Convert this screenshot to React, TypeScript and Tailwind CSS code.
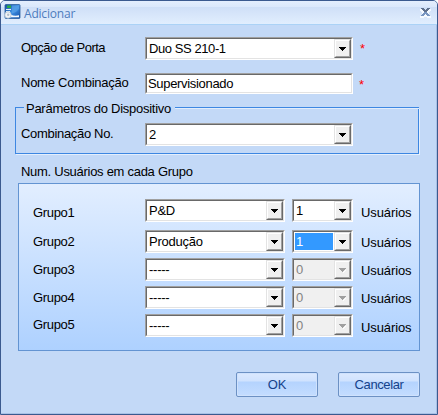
import React from "react";

function Arrow({ disabled }: { disabled?: boolean }) {
  return (
    <span className="flex h-[19px] w-[17px] shrink-0 border border-t-[#e3e3e3] border-l-[#e3e3e3] border-r-[#696969] border-b-[#696969]">
      <span className="flex flex-1 items-start justify-center border border-t-white border-l-white border-r-[#a0a0a0] border-b-[#a0a0a0] bg-[#f0f0f0] pt-[6px]">
        <svg width="7" height="5" viewBox="0 0 7 5" shapeRendering="crispEdges" className="shrink-0">
          {disabled && <path d="M4 4h1v-1h1v-1h1v1h-1v1h-1v1h-1z" fill="#ffffff" />}
          <path d="M0 0h7v1h-1v1h-1v1h-1v1h-1v-1h-1v-1h-1v-1h-1z" fill={disabled ? "#a0a0a0" : "#000000"} />
        </svg>
      </span>
    </span>
  );
}

function Field({ children, className = "" }: { children: React.ReactNode; className?: string }) {
  return (
    <div className={`flex shrink-0 border border-t-[#a0a0a0] border-l-[#a0a0a0] border-r-white border-b-white ${className}`}>
      <div className="flex min-w-0 flex-1 border border-t-[#696969] border-l-[#696969] border-r-[#e3e3e3] border-b-[#e3e3e3]">
        {children}
      </div>
    </div>
  );
}

function Combo({
  value,
  width,
  text = "tracking-[-0.24px]",
  selected,
  disabled,
}: {
  value: string;
  width: string;
  text?: string;
  selected?: boolean;
  disabled?: boolean;
}) {
  return (
    <Field className={`h-[23px] ${width} ${disabled ? "bg-[#f0f0f0]" : "bg-white"}`}>
      <div className="flex flex-1 p-px">
        <span
          className={`flex-1 pt-px pl-px whitespace-nowrap ${text} ${
            selected ? "bg-[#3399ff] text-white" : disabled ? "text-[#838383]" : "text-black"
          }`}
        >
          {value}
        </span>
      </div>
      <Arrow disabled={disabled} />
    </Field>
  );
}

function PushButton({ label, text }: { label: string; text: string }) {
  return (
    <button
      className={`h-[25px] w-[82px] rounded-[2px] border border-[#6c91c4] bg-[linear-gradient(to_bottom,#dce9fe_0,#cfe2fe_36%,#b4d3fe_38%,#c4ddff_100%)] pb-px text-[#15428b] shadow-[inset_0_0_0_1px_#cfe2fd] ${text}`}
    >
      {label}
    </button>
  );
}

const groups = [
  { name: "Grupo1", combo: "P&D", count: "1", row: "h-[31px]", left: "pt-[6px]", right: "pt-[6px]" },
  { name: "Grupo2", combo: "Produção", count: "1", selected: true, row: "h-[28px]", left: "pt-[4px]", right: "pt-[5px]" },
  { name: "Grupo3", combo: "-----", count: "0", disabled: true, row: "h-[28px]", left: "pt-[4px]", right: "pt-[5px]" },
  { name: "Grupo4", combo: "-----", count: "0", disabled: true, row: "h-[28px]", left: "pt-[4px]", right: "pt-[5px]" },
  { name: "Grupo5", combo: "-----", count: "0", disabled: true, row: "h-[28px]", left: "pt-[3px]", right: "pt-[6px]" },
];

export default function App() {
  return (
    <div className="h-[415px] w-[438px] bg-white font-['Liberation_Sans',Arial,sans-serif] text-[13px] leading-[15px] text-black">
      <div className="flex h-full flex-col overflow-hidden rounded-t-[5px] border border-[#3b5a8f] bg-[#c3d9f7] shadow-[inset_-1px_-1px_0_#a9c1e6]">
        <header className="flex h-[24px] shrink-0 items-start border-b border-[#abd2f6] bg-[linear-gradient(to_bottom,#e4eefd_0,#dbe8fb_6px,#cfdff7_6px,#e1eefe_23px)] pl-[3px]">
          <svg width="17" height="16" viewBox="0 0 17 16" className="mt-[3px]">
            <defs>
              <linearGradient id="screen" x1="0" y1="0" x2="1" y2="1">
                <stop offset="0" stopColor="#174c9c" />
                <stop offset="0.5" stopColor="#3f90e4" />
                <stop offset="1" stopColor="#1450a8" />
              </linearGradient>
            </defs>
            <path d="M1 1.5q0-1 1-1h13q1 0 1 1v12q0 1-1 1H2q-1 0-1-1z" fill="url(#screen)" stroke="#2c5f9e" strokeWidth="0.8" />
            <path d="M8 1.5h7v3q-2 4-7 5z" fill="#5ba4e8" opacity="0.65" />
            <rect x="3" y="1.5" width="4" height="2.5" fill="#29ad43" />
            <path d="M2 5.5h5M2 7.5h4" stroke="#e4f1fb" strokeWidth="1.2" />
            <path d="M6.500 10.500q4 2 8.500 0.800v2H6.500z" fill="#f6fbff" />
            <circle cx="4" cy="11" r="3.200" fill="#f1f4f7" stroke="#b5c3cf" strokeWidth="0.8" />
            <circle cx="4.200" cy="10.800" r="1.200" fill="#b3c0cc" />
          </svg>
          <span className="mt-[6px] ml-[3px] font-['Open_Sans','Noto_Sans',sans-serif] text-[12px] leading-[14px] tracking-[-0.2px] text-[#4d7cbd]">
            Adicionar
          </span>
          <svg width="11" height="10" viewBox="0 0 11 10" shapeRendering="crispEdges" className="mt-[7px] mr-[6px] ml-auto">
            <path d="M0 1h4v1h3v-1h4v2h-1v1h-1v3h1v1h1v2H7V9H4v1H0V8h1V7h1V4H1V3H0z" fill="#f5faff" />
            <path d="M1 0h3v1h1v1h1v-1h1v-1h3v1h-1v1h-1v1h-1v1H4V3H3V2H2V1H1z" fill="#60718e" />
            <path d="M4 4h3v1h1v1h1v1h1v1H7V7H6V6H5v1H4v1H1V7h1V6h1V5h1z" fill="#7895c0" />
          </svg>
        </header>

        <div className="flex h-[36px] shrink-0 items-start pt-[12px] pl-[20px]">
          <label className="w-[124px] pt-[3px] tracking-[-0.5px]">Opção de Porta</label>
          <Combo value="Duo SS 210-1" width="w-[208px]" text="tracking-[-0.42px]" />
          <span className="pt-[4px] pl-[7px] text-[#ff0000]">*</span>
        </div>
        <div className="flex h-[34px] shrink-0 items-start pt-[12px] pl-[20px]">
          <label className="w-[124px] pt-[2px] tracking-[-0.25px]">Nome Combinação</label>
          <Field className="h-[21px] w-[208px] bg-white">
            <span className="pt-px pl-px tracking-[-0.32px]">Supervisionado</span>
          </Field>
          <span className="pt-[4px] pl-[6px] text-[#ff0000]">*</span>
        </div>

        <fieldset className="mt-[6px] ml-[14px] h-[53px] w-[405px] shrink-0">
          <div className="flex h-[7px] items-end">
            <span className="h-px w-[9px] bg-[#3d87e2]" />
            <span className="-mb-[8px] w-[151px] pl-[2px] whitespace-nowrap tracking-[-0.27px]">Parâmetros do Dispositivo</span>
            <span className="h-px w-[244px] bg-[#3d87e2] shadow-[0_1px_0_#e1edfd]" />
          </div>
          <div className="flex h-[46px] w-[404px] items-start border-x border-b border-[#3d87e2] pt-[15px] pl-[5px] shadow-[1px_1px_0_#e4effd]">
            <label className="w-[124px] pt-[3px] tracking-[-0.32px]">Combinação No.</label>
            <Combo value="2" width="w-[208px]" />
          </div>
        </fieldset>

        <div className="mt-[10px] h-[19px] shrink-0 pl-[20px] tracking-[-0.28px]">Num. Usuários em cada Grupo</div>
        <section className="ml-[17px] h-[168px] w-[402px] shrink-0 border border-[#6394d2] bg-linear-to-b from-[#e2eeff] to-[#aed1ff] pt-[15px] pl-[14px]">
          {groups.map((g) => (
            <div key={g.name} className={`flex items-start ${g.row}`}>
              <label className={`w-[112px] tracking-[-0.32px] ${g.left}`}>{g.name}</label>
              <Combo value={g.combo} width="w-[140px]" />
              <span className="w-[7px]" />
              <Combo value={g.count} width="w-[61px]" selected={g.selected} disabled={g.disabled} />
              <span className={`pl-[8px] tracking-[-0.1px] ${g.right}`}>Usuários</span>
            </div>
          ))}
        </section>

        <footer className="mt-[21px] flex gap-[20px] pl-[235px]">
          <PushButton label="OK" text="tracking-[-0.2px]" />
          <PushButton label="Cancelar" text="tracking-[-0.4px]" />
        </footer>
      </div>
    </div>
  );
}
